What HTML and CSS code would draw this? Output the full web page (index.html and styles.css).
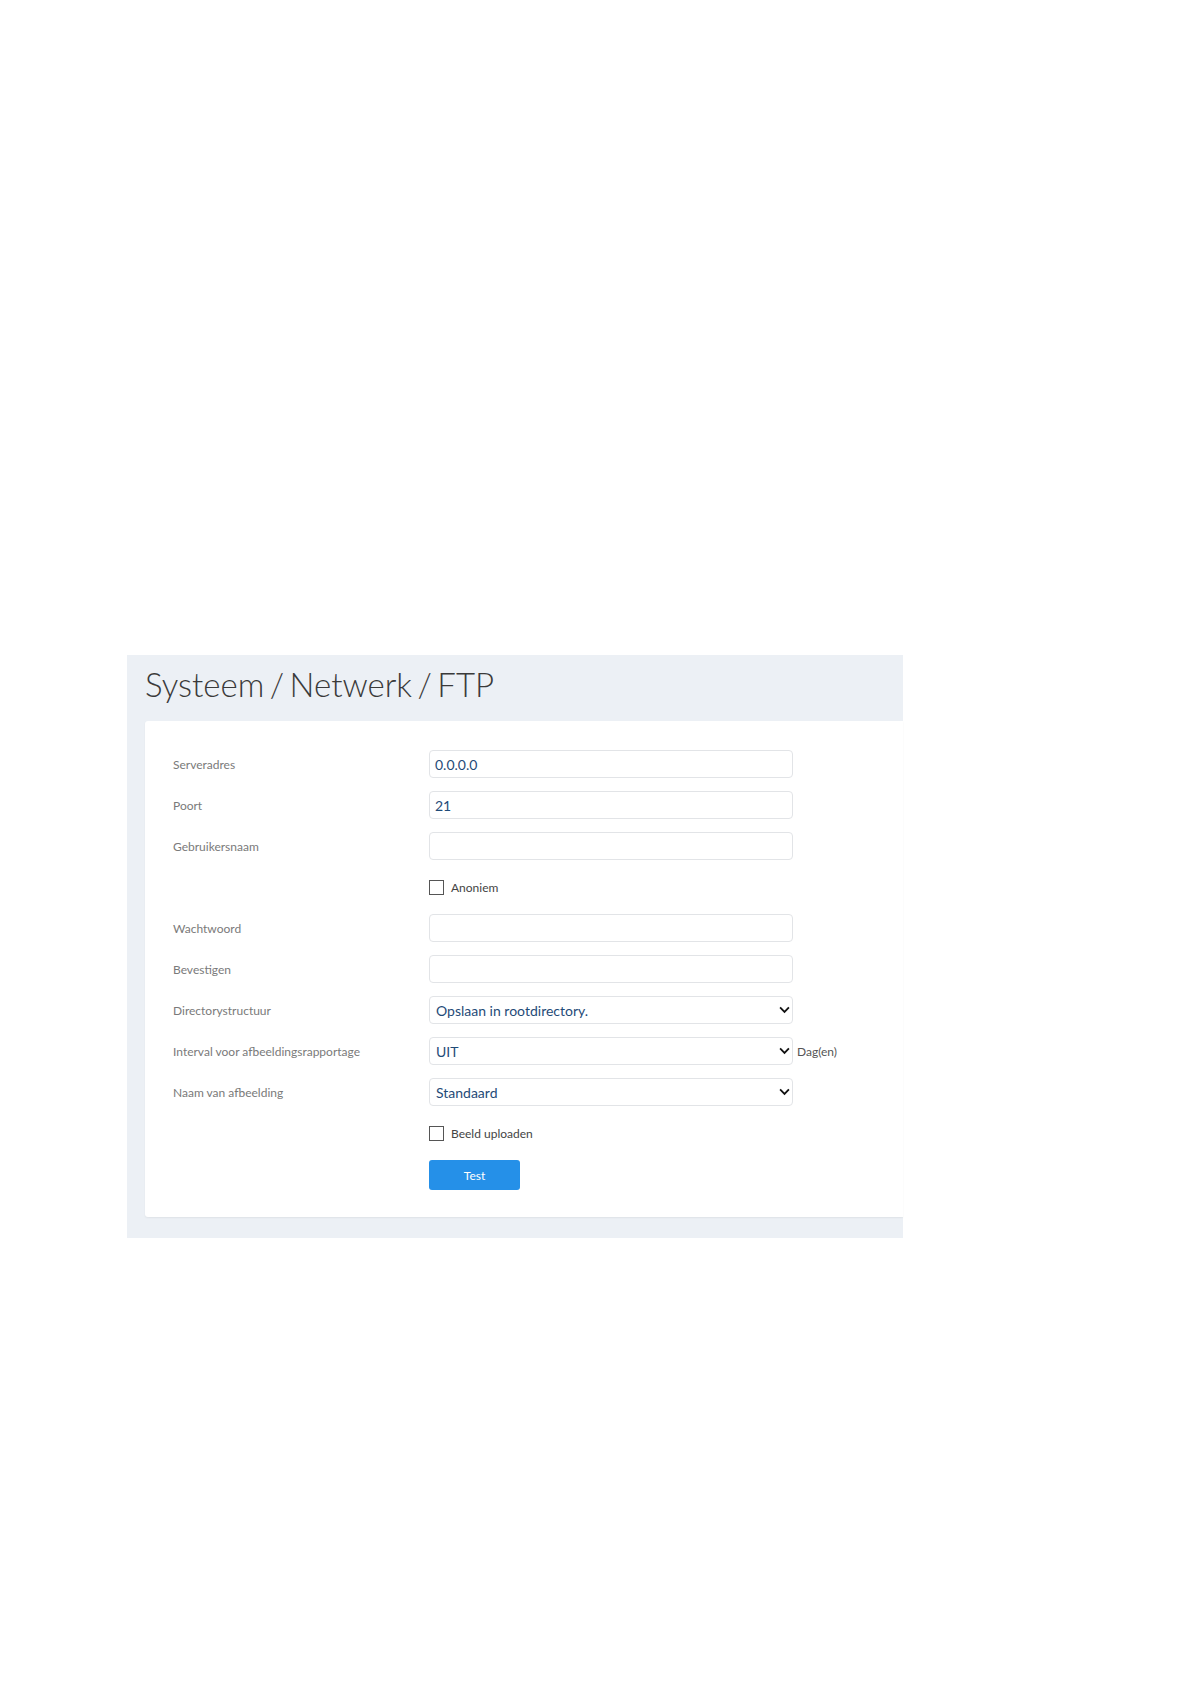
FILE: index.html
```html
<!DOCTYPE html>
<html lang="nl">
<head>
<meta charset="utf-8">
<title>Systeem / Netwerk / FTP</title>
<link rel="stylesheet" href="styles.css">
</head>
<body>
<div class="panel">
  <div class="panel-head"><h1 class="title">Systeem / Netwerk / FTP</h1></div>
  <div class="card">
    <div class="row"><div class="label">Serveradres</div><div class="field"><div class="input">0.0.0.0</div></div></div>
    <div class="row"><div class="label">Poort</div><div class="field"><div class="input">21</div></div></div>
    <div class="row"><div class="label">Gebruikersnaam</div><div class="field"><div class="input"></div></div></div>
    <div class="row"><div class="label"></div><div class="field"><span class="check"></span><span class="check-text">Anoniem</span></div></div>
    <div class="row"><div class="label">Wachtwoord</div><div class="field"><div class="input"></div></div></div>
    <div class="row"><div class="label">Bevestigen</div><div class="field"><div class="input"></div></div></div>
    <div class="row"><div class="label">Directorystructuur</div><div class="field"><div class="input select"><span>Opslaan in rootdirectory.</span><svg class="chev" viewBox="0 0 12 8" width="11" height="8"><path d="M1.2 1.2 L6 6 L10.8 1.2" fill="none" stroke="#111" stroke-width="2"/></svg></div></div></div>
    <div class="row"><div class="label">Interval voor afbeeldingsrapportage</div><div class="field"><div class="input select"><span>UIT</span><svg class="chev" viewBox="0 0 12 8" width="11" height="8"><path d="M1.2 1.2 L6 6 L10.8 1.2" fill="none" stroke="#111" stroke-width="2"/></svg></div><span class="unit">Dag(en)</span></div></div>
    <div class="row"><div class="label">Naam van afbeelding</div><div class="field"><div class="input select"><span>Standaard</span><svg class="chev" viewBox="0 0 12 8" width="11" height="8"><path d="M1.2 1.2 L6 6 L10.8 1.2" fill="none" stroke="#111" stroke-width="2"/></svg></div></div></div>
    <div class="row"><div class="label"></div><div class="field"><span class="check"></span><span class="check-text">Beeld uploaden</span></div></div>
    <div class="row btn-row"><div class="label"></div><div class="field"><button class="btn">Test</button></div></div>
  </div>
</div>
</body>
</html>
```
FILE: styles.css
```css
html, body {
  margin: 0;
  padding: 0;
  background: #ffffff;
}
body {
  font-family: Lato, "Open Sans", "Liberation Sans", sans-serif;
}
.panel {
  margin: 655px 0 0 127px;
  width: 776px;
  background: #ecf0f5;
  padding-bottom: 21px;
}
.panel-head {
  height: 66px;
  display: flex;
  align-items: center;
  padding-left: 18px;
}
.title {
  margin: -8px 0 0 0;
  font-size: 33px;
  font-weight: 300;
  color: #3a3a3a;
  word-spacing: -3.5px;
}
.card {
  margin-left: 18px;
  background: #fff;
  border-radius: 3px 0 0 3px;
  box-shadow: 0 1px 2px rgba(0,0,0,0.06);
  padding: 29px 0 27px 28px;
  display: flex;
  flex-direction: column;
  gap: 13px;
}
.row {
  display: flex;
  align-items: center;
  height: 28px;
}
.btn-row {
  height: 30px;
}
.label {
  width: 256px;
  flex: none;
  font-size: 12px;
  color: #7a7a7a;
}
.field {
  display: flex;
  align-items: center;
}
.input {
  box-sizing: border-box;
  width: 364px;
  height: 28px;
  border: 1px solid #e2e4e7;
  border-radius: 4px;
  background: #fff;
  padding: 0 5px;
  display: flex;
  align-items: center;
  font-size: 14px;
  color: #1f4b78;
}
.select {
  justify-content: space-between;
  padding: 0 1px 0 6px;
}
.chev {
  display: block;
  margin-right: 1px;
}
.unit {
  margin-left: 4px;
  font-size: 12px;
  color: #555;
}
.check {
  box-sizing: border-box;
  width: 15px;
  height: 15px;
  border: 1px solid #555;
  background: #fff;
  margin-right: 7px;
}
.check-text {
  font-size: 12px;
  color: #444;
}
.btn {
  width: 91px;
  height: 30px;
  border: none;
  border-radius: 3px;
  background: #2590e8;
  color: #fff;
  font-family: Lato, "Open Sans", "Liberation Sans", sans-serif;
  font-size: 12px;
  padding: 0;
}
```
